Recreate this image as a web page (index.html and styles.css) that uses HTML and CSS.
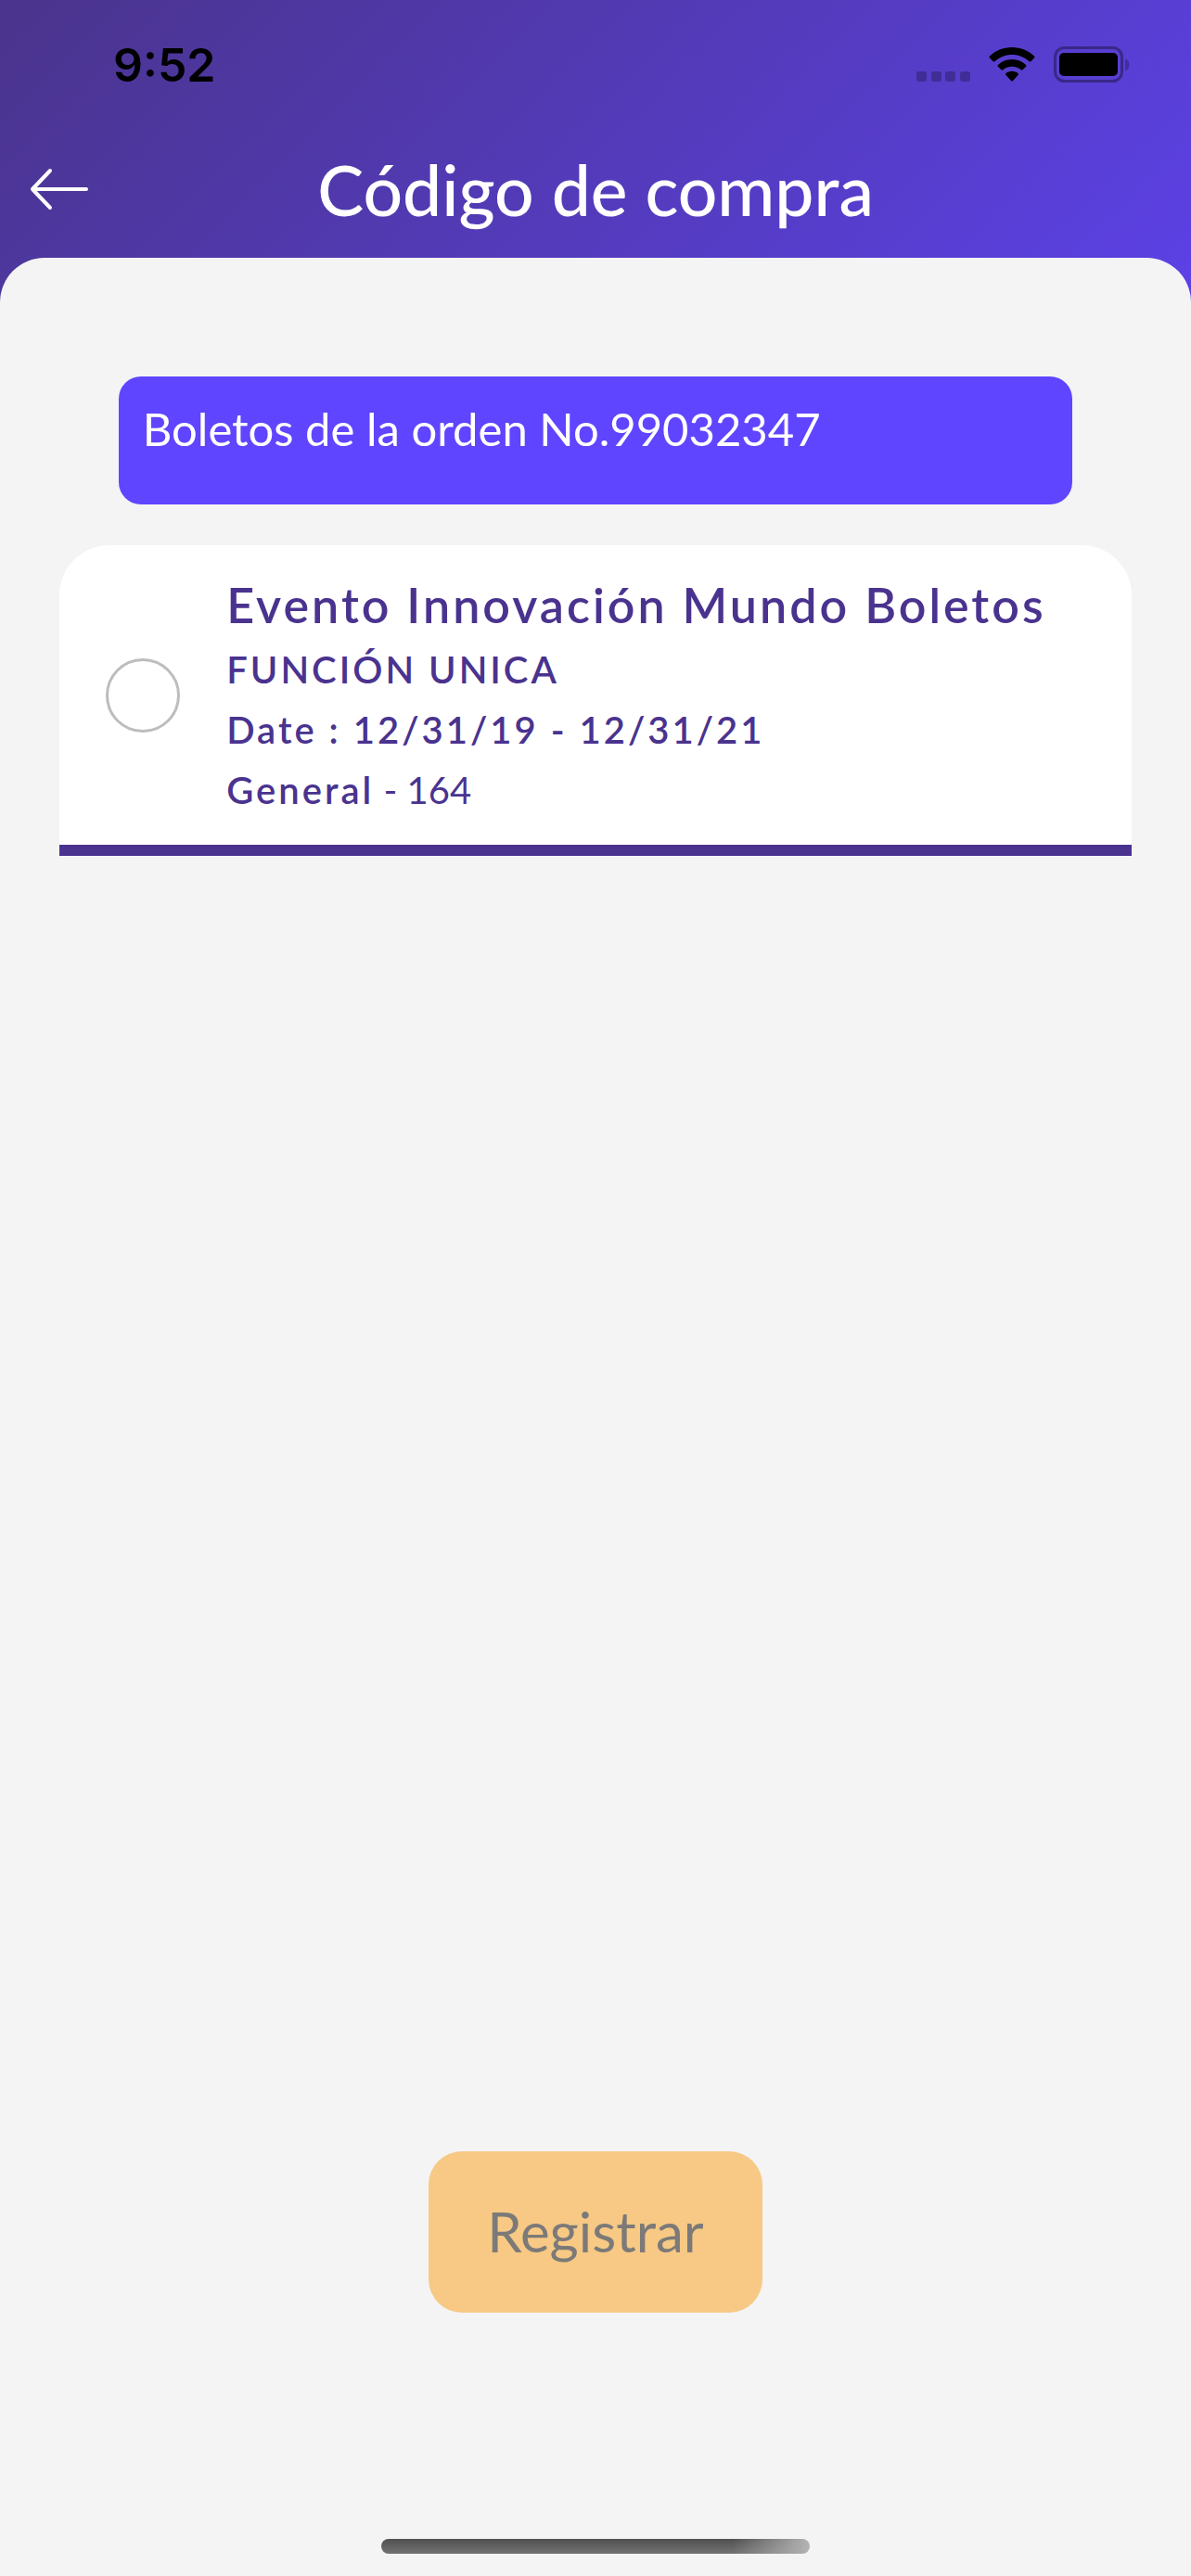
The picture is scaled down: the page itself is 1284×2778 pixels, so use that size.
FILE: index.html
```html
<!DOCTYPE html>
<html lang="es">
<head>
	<meta charset="utf-8" />
	<title>Código de compra</title>
	<meta name="viewport" content="width=device-width, initial-scale=1.0" />
	<link rel="stylesheet" href="styles.css">
</head>

<body>
	<div class="statusBar">
		<span class="time">9:52</span>
		<div class="statusIcons">
			<svg class="signal" width="58" height="38" viewBox="0 0 58 38" aria-hidden="true">
				<rect x="0" y="27" width="11" height="11" rx="3" />
				<rect x="16" y="27" width="11" height="11" rx="3" />
				<rect x="31" y="27" width="11" height="11" rx="3" />
				<rect x="47" y="27" width="11" height="11" rx="3" />
			</svg>
			<svg width="50" height="38" viewBox="0 0 50 38" aria-hidden="true">
				<path d="M25 1C15.500 1 7 4.600 1 10.600Q0 11.600 1 12.600L4.600 16.200Q5.500 17 6.400 16.200C11.300 11.600 17.800 8.900 25 8.900S38.700 11.600 43.600 16.200Q44.500 17 45.400 16.200L49 12.600Q50 11.600 49 10.600C43 4.600 34.500 1 25 1Z" />
				<path d="M25 14C19 14 13.800 16.200 9.900 19.900Q9 20.800 9.900 21.700L13.500 25.300Q14.400 26.100 15.300 25.300C17.900 23 21.300 21.700 25 21.700S32.100 23 34.700 25.300Q35.600 26.100 36.500 25.300L40.100 21.700Q41 20.800 40.100 19.900C36.200 16.200 31 14 25 14Z" />
				<path d="M25 26.800C22.300 26.800 20.200 27.700 18.500 29.100Q17.600 30 18.400 30.900L24 36.900Q25 38 26 36.900L31.600 30.900Q32.400 30 31.500 29.100C29.800 27.700 27.700 26.800 25 26.800Z" />
			</svg>
			<svg width="82" height="39" viewBox="0 0 82 39" aria-hidden="true">
				<rect class="faint-line" x="1.500" y="1.500" width="72" height="36" rx="10" />
				<rect x="6" y="7" width="63" height="25" rx="5" />
				<path class="faint" d="M77 13.500C80 14.500 81.500 17 81.500 20S80 25.500 77 26.500Z" />
			</svg>
		</div>
	</div>

	<header class="topBar">
		<a class="back" href="#" aria-label="Regresar">
			<svg width="64" height="46" viewBox="0 0 64 46">
				<path d="M22 3L3 23L22 43M3 23H61" />
			</svg>
		</a>
		<h1>Código de compra</h1>
	</header>

	<main class="sheet">
		<p class="order">Boletos de la orden No.99032347</p>

		<label class="ticket">
			<input type="radio" name="ticket">
			<span class="ticketInfo">
				<strong class="eventName">Evento Innovación Mundo Boletos</strong>
				<strong>FUNCIÓN UNICA</strong>
				<strong>Date : 12/31/19 - 12/31/21</strong>
				<span><strong>General</strong> - 164</span>
			</span>
		</label>

		<button class="register" type="button" disabled>Registrar</button>
		<div class="homeBar"></div>
	</main>
</body>
</html>
```
FILE: styles.css
```css
*{
	box-sizing: border-box;
}

body{
	margin: 0;
	min-height: 100vh;
	display: flex;
	flex-direction: column;
	font-family: Lato, sans-serif;
	background: #f4f4f4 linear-gradient(135deg, #4a348c, #5c41e6) no-repeat;
	background-size: 100% 330px;
}

/* phone status bar */
.statusBar{
	display: flex;
	justify-content: space-between;
	align-items: center;
	height: 139px;
	padding: 0 66px 0 122px;
}

.time{
	font: 600 50px/60px Inter, sans-serif;
	color: #000;
}

.statusIcons{
	display: flex;
	gap: 20px;
}

.signal,
.faint{
	opacity: 0.25;
}

.faint-line{
	fill: none;
	stroke: #000;
	stroke-width: 3;
	opacity: 0.35;
}

/* title */
.topBar{
	display: grid;
	grid-template-columns: 64px 1fr 64px;
	align-items: center;
	height: 139px;
	padding: 0 32px 9px;
}

.back{
	display: flex;
}

.back path{
	fill: none;
	stroke: #fff;
	stroke-width: 4;
	stroke-linecap: round;
	stroke-linejoin: round;
}

.topBar h1{
	margin: 0;
	font-size: 75px;
	line-height: 90px;
	font-weight: 500;
	text-align: center;
	color: #fff;
}

.sheet{
	flex: 1;
	display: flex;
	flex-direction: column;
	align-items: center;
	padding: 128px 5% 24px;
	background: #f4f4f4;
	border-radius: 48px 48px 0 0;
}

.order{
	width: 89%;
	margin: 0 0 44px;
	padding: 26px 26px 52px;
	border-radius: 24px;
	font-size: 49px;
	line-height: 60px;
	color: #fff;
	background: #5f45ff;
}

/* ticket card */
.ticket{
	width: 100%;
	display: flex;
	align-items: center;
	gap: 50px;
	padding: 26px 50px;
	background: #fff;
	border-bottom: 12px solid #4a338f;
	border-radius: 54px 54px 0 0;
}

.ticket input{
	appearance: none;
	flex: none;
	width: 80px;
	height: 80px;
	margin: 0;
	border: 3px solid #bdbdbd;
	border-radius: 50%;
}

.ticket input:checked{
	background: #4a338f;
}

.ticketInfo{
	display: flex;
	flex-direction: column;
	font-size: 40px;
	line-height: 65px;
	color: #4a338f;
}

.ticketInfo strong{
	font-weight: 600;
	letter-spacing: 3px;
}

.ticketInfo .eventName{
	font-size: 52px;
	line-height: 76px;
}

.register{
	margin: auto 0 244px;
	padding: 49px 63px 51px;
	border: 0;
	border-radius: 36px;
	font: 60px/74px Lato, sans-serif;
	color: #7c7a78;
	background: #f7c985;
}

.homeBar{
	width: 40%;
	height: 16px;
	border-radius: 8px;
	background: linear-gradient(to right, transparent 82%, #b4b4b4), linear-gradient(#505050, #727272);
}
```
